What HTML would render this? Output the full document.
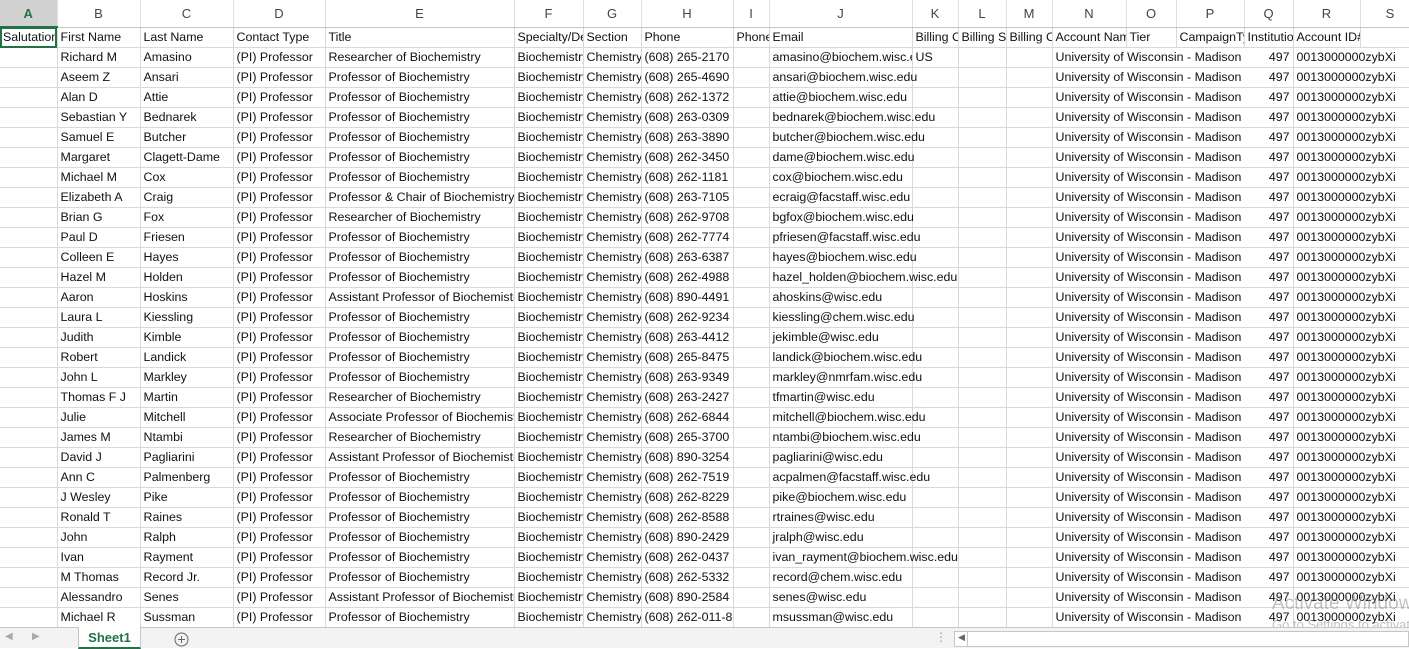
<!DOCTYPE html>
<html><head><meta charset="utf-8"><style>
*{margin:0;padding:0;box-sizing:border-box}
body{width:1409px;height:648px;overflow:hidden;background:#fff;font-family:"Liberation Sans",sans-serif;position:relative}
table{border-collapse:collapse;table-layout:fixed;position:absolute;left:0;top:0;width:1420px}
td{height:20px;border-right:1px solid #d9d9d9;border-bottom:1px solid #d9d9d9;font-size:12.4px;color:#111;white-space:nowrap;overflow:hidden;padding:0 3px;line-height:19px}
tr.h td{height:27px;text-align:center;color:#444;font-size:13px;background:#fff;border-bottom:1px solid #c6c6c6;border-right:1px solid #e1e1e1}
tr.h td.sel{background:#d2d2d2;color:#217346;font-weight:bold;border-bottom:2px solid #217346}
td.j{overflow:visible}
td.q{text-align:right;position:relative;background:#fff}
tr.d td:nth-child(14){overflow:visible;border-right-color:transparent}
tr.d td:nth-child(15){border-right-color:transparent}
tr.d td:nth-child(16){border-right-color:transparent}
tr.d td:nth-child(18){overflow:visible;border-right-color:transparent}
td.a1{outline:2px solid #217346;outline-offset:-2px;position:relative}
.bar{position:absolute;left:0;top:627px;width:1409px;height:21px;background:#f3f3f3;border-top:1px solid #c6c6c6}
.tab{position:absolute;left:78px;top:-1px;width:63px;height:22px;background:#fff;border-left:1px solid #c6c6c6;border-right:1px solid #c6c6c6;color:#217346;font-weight:bold;font-size:13px;text-align:center;line-height:22px;border-bottom:2px solid #217346}
.wm{position:absolute;left:1272px;top:594px;color:rgba(120,120,120,.45);font-size:19px;line-height:20px;white-space:nowrap}
.wm2{position:absolute;left:1272px;top:617px;color:rgba(120,120,120,.45);font-size:13px;white-space:nowrap}
</style></head><body>
<table>
<colgroup><col style="width:57px"><col style="width:83px"><col style="width:93px"><col style="width:92px"><col style="width:189px"><col style="width:69px"><col style="width:58px"><col style="width:92px"><col style="width:36px"><col style="width:143px"><col style="width:46px"><col style="width:48px"><col style="width:46px"><col style="width:74px"><col style="width:50px"><col style="width:68px"><col style="width:49px"><col style="width:67px"><col style="width:60px"></colgroup>
<tr class="h"><td class="sel">A</td><td>B</td><td>C</td><td>D</td><td>E</td><td>F</td><td>G</td><td>H</td><td>I</td><td>J</td><td>K</td><td>L</td><td>M</td><td>N</td><td>O</td><td>P</td><td>Q</td><td>R</td><td>S</td></tr>
<tr><td class="a1">Salutation</td><td>First Name</td><td>Last Name</td><td>Contact Type</td><td>Title</td><td>Specialty/Dept</td><td>Section</td><td>Phone</td><td>Phone</td><td>Email</td><td>Billing City</td><td>Billing State</td><td>Billing Country</td><td>Account Name</td><td>Tier</td><td>CampaignType</td><td>Institution</td><td>Account ID#</td><td></td></tr>
<tr class="d"><td></td><td>Richard M</td><td>Amasino</td><td>(PI) Professor</td><td>Researcher of Biochemistry</td><td>Biochemistry</td><td>Chemistry</td><td>(608) 265-2170</td><td></td><td>amasino@biochem.wisc.edu</td><td>US</td><td></td><td></td><td>University of Wisconsin - Madison</td><td></td><td></td><td class="q">497</td><td>0013000000zybXi</td><td></td></tr>
<tr class="d"><td></td><td>Aseem Z</td><td>Ansari</td><td>(PI) Professor</td><td>Professor of Biochemistry</td><td>Biochemistry</td><td>Chemistry</td><td>(608) 265-4690</td><td></td><td class="j">ansari@biochem.wisc.edu</td><td></td><td></td><td></td><td>University of Wisconsin - Madison</td><td></td><td></td><td class="q">497</td><td>0013000000zybXi</td><td></td></tr>
<tr class="d"><td></td><td>Alan D</td><td>Attie</td><td>(PI) Professor</td><td>Professor of Biochemistry</td><td>Biochemistry</td><td>Chemistry</td><td>(608) 262-1372</td><td></td><td class="j">attie@biochem.wisc.edu</td><td></td><td></td><td></td><td>University of Wisconsin - Madison</td><td></td><td></td><td class="q">497</td><td>0013000000zybXi</td><td></td></tr>
<tr class="d"><td></td><td>Sebastian Y</td><td>Bednarek</td><td>(PI) Professor</td><td>Professor of Biochemistry</td><td>Biochemistry</td><td>Chemistry</td><td>(608) 263-0309</td><td></td><td class="j">bednarek@biochem.wisc.edu</td><td></td><td></td><td></td><td>University of Wisconsin - Madison</td><td></td><td></td><td class="q">497</td><td>0013000000zybXi</td><td></td></tr>
<tr class="d"><td></td><td>Samuel E</td><td>Butcher</td><td>(PI) Professor</td><td>Professor of Biochemistry</td><td>Biochemistry</td><td>Chemistry</td><td>(608) 263-3890</td><td></td><td class="j">butcher@biochem.wisc.edu</td><td></td><td></td><td></td><td>University of Wisconsin - Madison</td><td></td><td></td><td class="q">497</td><td>0013000000zybXi</td><td></td></tr>
<tr class="d"><td></td><td>Margaret</td><td>Clagett-Dame</td><td>(PI) Professor</td><td>Professor of Biochemistry</td><td>Biochemistry</td><td>Chemistry</td><td>(608) 262-3450</td><td></td><td class="j">dame@biochem.wisc.edu</td><td></td><td></td><td></td><td>University of Wisconsin - Madison</td><td></td><td></td><td class="q">497</td><td>0013000000zybXi</td><td></td></tr>
<tr class="d"><td></td><td>Michael M</td><td>Cox</td><td>(PI) Professor</td><td>Professor of Biochemistry</td><td>Biochemistry</td><td>Chemistry</td><td>(608) 262-1181</td><td></td><td class="j">cox@biochem.wisc.edu</td><td></td><td></td><td></td><td>University of Wisconsin - Madison</td><td></td><td></td><td class="q">497</td><td>0013000000zybXi</td><td></td></tr>
<tr class="d"><td></td><td>Elizabeth A</td><td>Craig</td><td>(PI) Professor</td><td>Professor &amp; Chair of Biochemistry</td><td>Biochemistry</td><td>Chemistry</td><td>(608) 263-7105</td><td></td><td class="j">ecraig@facstaff.wisc.edu</td><td></td><td></td><td></td><td>University of Wisconsin - Madison</td><td></td><td></td><td class="q">497</td><td>0013000000zybXi</td><td></td></tr>
<tr class="d"><td></td><td>Brian G</td><td>Fox</td><td>(PI) Professor</td><td>Researcher of Biochemistry</td><td>Biochemistry</td><td>Chemistry</td><td>(608) 262-9708</td><td></td><td class="j">bgfox@biochem.wisc.edu</td><td></td><td></td><td></td><td>University of Wisconsin - Madison</td><td></td><td></td><td class="q">497</td><td>0013000000zybXi</td><td></td></tr>
<tr class="d"><td></td><td>Paul D</td><td>Friesen</td><td>(PI) Professor</td><td>Professor of Biochemistry</td><td>Biochemistry</td><td>Chemistry</td><td>(608) 262-7774</td><td></td><td class="j">pfriesen@facstaff.wisc.edu</td><td></td><td></td><td></td><td>University of Wisconsin - Madison</td><td></td><td></td><td class="q">497</td><td>0013000000zybXi</td><td></td></tr>
<tr class="d"><td></td><td>Colleen E</td><td>Hayes</td><td>(PI) Professor</td><td>Professor of Biochemistry</td><td>Biochemistry</td><td>Chemistry</td><td>(608) 263-6387</td><td></td><td class="j">hayes@biochem.wisc.edu</td><td></td><td></td><td></td><td>University of Wisconsin - Madison</td><td></td><td></td><td class="q">497</td><td>0013000000zybXi</td><td></td></tr>
<tr class="d"><td></td><td>Hazel M</td><td>Holden</td><td>(PI) Professor</td><td>Professor of Biochemistry</td><td>Biochemistry</td><td>Chemistry</td><td>(608) 262-4988</td><td></td><td class="j">hazel_holden@biochem.wisc.edu</td><td></td><td></td><td></td><td>University of Wisconsin - Madison</td><td></td><td></td><td class="q">497</td><td>0013000000zybXi</td><td></td></tr>
<tr class="d"><td></td><td>Aaron</td><td>Hoskins</td><td>(PI) Professor</td><td>Assistant Professor of Biochemistry</td><td>Biochemistry</td><td>Chemistry</td><td>(608) 890-4491</td><td></td><td class="j">ahoskins@wisc.edu</td><td></td><td></td><td></td><td>University of Wisconsin - Madison</td><td></td><td></td><td class="q">497</td><td>0013000000zybXi</td><td></td></tr>
<tr class="d"><td></td><td>Laura L</td><td>Kiessling</td><td>(PI) Professor</td><td>Professor of Biochemistry</td><td>Biochemistry</td><td>Chemistry</td><td>(608) 262-9234</td><td></td><td class="j">kiessling@chem.wisc.edu</td><td></td><td></td><td></td><td>University of Wisconsin - Madison</td><td></td><td></td><td class="q">497</td><td>0013000000zybXi</td><td></td></tr>
<tr class="d"><td></td><td>Judith</td><td>Kimble</td><td>(PI) Professor</td><td>Professor of Biochemistry</td><td>Biochemistry</td><td>Chemistry</td><td>(608) 263-4412</td><td></td><td class="j">jekimble@wisc.edu</td><td></td><td></td><td></td><td>University of Wisconsin - Madison</td><td></td><td></td><td class="q">497</td><td>0013000000zybXi</td><td></td></tr>
<tr class="d"><td></td><td>Robert</td><td>Landick</td><td>(PI) Professor</td><td>Professor of Biochemistry</td><td>Biochemistry</td><td>Chemistry</td><td>(608) 265-8475</td><td></td><td class="j">landick@biochem.wisc.edu</td><td></td><td></td><td></td><td>University of Wisconsin - Madison</td><td></td><td></td><td class="q">497</td><td>0013000000zybXi</td><td></td></tr>
<tr class="d"><td></td><td>John L</td><td>Markley</td><td>(PI) Professor</td><td>Professor of Biochemistry</td><td>Biochemistry</td><td>Chemistry</td><td>(608) 263-9349</td><td></td><td class="j">markley@nmrfam.wisc.edu</td><td></td><td></td><td></td><td>University of Wisconsin - Madison</td><td></td><td></td><td class="q">497</td><td>0013000000zybXi</td><td></td></tr>
<tr class="d"><td></td><td>Thomas F J</td><td>Martin</td><td>(PI) Professor</td><td>Researcher of Biochemistry</td><td>Biochemistry</td><td>Chemistry</td><td>(608) 263-2427</td><td></td><td class="j">tfmartin@wisc.edu</td><td></td><td></td><td></td><td>University of Wisconsin - Madison</td><td></td><td></td><td class="q">497</td><td>0013000000zybXi</td><td></td></tr>
<tr class="d"><td></td><td>Julie</td><td>Mitchell</td><td>(PI) Professor</td><td>Associate Professor of Biochemistry</td><td>Biochemistry</td><td>Chemistry</td><td>(608) 262-6844</td><td></td><td class="j">mitchell@biochem.wisc.edu</td><td></td><td></td><td></td><td>University of Wisconsin - Madison</td><td></td><td></td><td class="q">497</td><td>0013000000zybXi</td><td></td></tr>
<tr class="d"><td></td><td>James M</td><td>Ntambi</td><td>(PI) Professor</td><td>Researcher of Biochemistry</td><td>Biochemistry</td><td>Chemistry</td><td>(608) 265-3700</td><td></td><td class="j">ntambi@biochem.wisc.edu</td><td></td><td></td><td></td><td>University of Wisconsin - Madison</td><td></td><td></td><td class="q">497</td><td>0013000000zybXi</td><td></td></tr>
<tr class="d"><td></td><td>David J</td><td>Pagliarini</td><td>(PI) Professor</td><td>Assistant Professor of Biochemistry</td><td>Biochemistry</td><td>Chemistry</td><td>(608) 890-3254</td><td></td><td class="j">pagliarini@wisc.edu</td><td></td><td></td><td></td><td>University of Wisconsin - Madison</td><td></td><td></td><td class="q">497</td><td>0013000000zybXi</td><td></td></tr>
<tr class="d"><td></td><td>Ann C</td><td>Palmenberg</td><td>(PI) Professor</td><td>Professor of Biochemistry</td><td>Biochemistry</td><td>Chemistry</td><td>(608) 262-7519</td><td></td><td class="j">acpalmen@facstaff.wisc.edu</td><td></td><td></td><td></td><td>University of Wisconsin - Madison</td><td></td><td></td><td class="q">497</td><td>0013000000zybXi</td><td></td></tr>
<tr class="d"><td></td><td>J Wesley</td><td>Pike</td><td>(PI) Professor</td><td>Professor of Biochemistry</td><td>Biochemistry</td><td>Chemistry</td><td>(608) 262-8229</td><td></td><td class="j">pike@biochem.wisc.edu</td><td></td><td></td><td></td><td>University of Wisconsin - Madison</td><td></td><td></td><td class="q">497</td><td>0013000000zybXi</td><td></td></tr>
<tr class="d"><td></td><td>Ronald T</td><td>Raines</td><td>(PI) Professor</td><td>Professor of Biochemistry</td><td>Biochemistry</td><td>Chemistry</td><td>(608) 262-8588</td><td></td><td class="j">rtraines@wisc.edu</td><td></td><td></td><td></td><td>University of Wisconsin - Madison</td><td></td><td></td><td class="q">497</td><td>0013000000zybXi</td><td></td></tr>
<tr class="d"><td></td><td>John</td><td>Ralph</td><td>(PI) Professor</td><td>Professor of Biochemistry</td><td>Biochemistry</td><td>Chemistry</td><td>(608) 890-2429</td><td></td><td class="j">jralph@wisc.edu</td><td></td><td></td><td></td><td>University of Wisconsin - Madison</td><td></td><td></td><td class="q">497</td><td>0013000000zybXi</td><td></td></tr>
<tr class="d"><td></td><td>Ivan</td><td>Rayment</td><td>(PI) Professor</td><td>Professor of Biochemistry</td><td>Biochemistry</td><td>Chemistry</td><td>(608) 262-0437</td><td></td><td class="j">ivan_rayment@biochem.wisc.edu</td><td></td><td></td><td></td><td>University of Wisconsin - Madison</td><td></td><td></td><td class="q">497</td><td>0013000000zybXi</td><td></td></tr>
<tr class="d"><td></td><td>M Thomas</td><td>Record Jr.</td><td>(PI) Professor</td><td>Professor of Biochemistry</td><td>Biochemistry</td><td>Chemistry</td><td>(608) 262-5332</td><td></td><td class="j">record@chem.wisc.edu</td><td></td><td></td><td></td><td>University of Wisconsin - Madison</td><td></td><td></td><td class="q">497</td><td>0013000000zybXi</td><td></td></tr>
<tr class="d"><td></td><td>Alessandro</td><td>Senes</td><td>(PI) Professor</td><td>Assistant Professor of Biochemistry</td><td>Biochemistry</td><td>Chemistry</td><td>(608) 890-2584</td><td></td><td class="j">senes@wisc.edu</td><td></td><td></td><td></td><td>University of Wisconsin - Madison</td><td></td><td></td><td class="q">497</td><td>0013000000zybXi</td><td></td></tr>
<tr class="d"><td></td><td>Michael R</td><td>Sussman</td><td>(PI) Professor</td><td>Professor of Biochemistry</td><td>Biochemistry</td><td>Chemistry</td><td>(608) 262-011-8608</td><td></td><td class="j">msussman@wisc.edu</td><td></td><td></td><td></td><td>University of Wisconsin - Madison</td><td></td><td></td><td class="q">497</td><td>0013000000zybXi</td><td></td></tr>
</table>
<div class="wm">Activate Windows</div>
<div class="wm2">Go to Settings to activate</div>
<div class="bar">
<span style="position:absolute;left:5px;top:3px;color:#aaa;font-size:10px">&#9664;</span>
<span style="position:absolute;left:32px;top:3px;color:#aaa;font-size:10px">&#9654;</span>
<div class="tab">Sheet1</div>
<svg style="position:absolute;left:174px;top:4px" width="15" height="15"><circle cx="7.5" cy="7.5" r="6.5" fill="none" stroke="#666"/><path d="M4 7.5h7M7.5 4v7" stroke="#666"/></svg>
<span style="position:absolute;left:935px;top:2px;color:#999;font-size:12px">&#8942;</span>
<div style="position:absolute;left:954px;top:3px;width:455px;height:16px;background:#fff;border:1px solid #c6c6c6"><span style="position:absolute;left:3px;top:0;font-size:9px;color:#666">&#9664;</span><div style="position:absolute;left:12px;top:0;width:1px;height:14px;background:#c6c6c6"></div></div>
</div>
</body></html>
